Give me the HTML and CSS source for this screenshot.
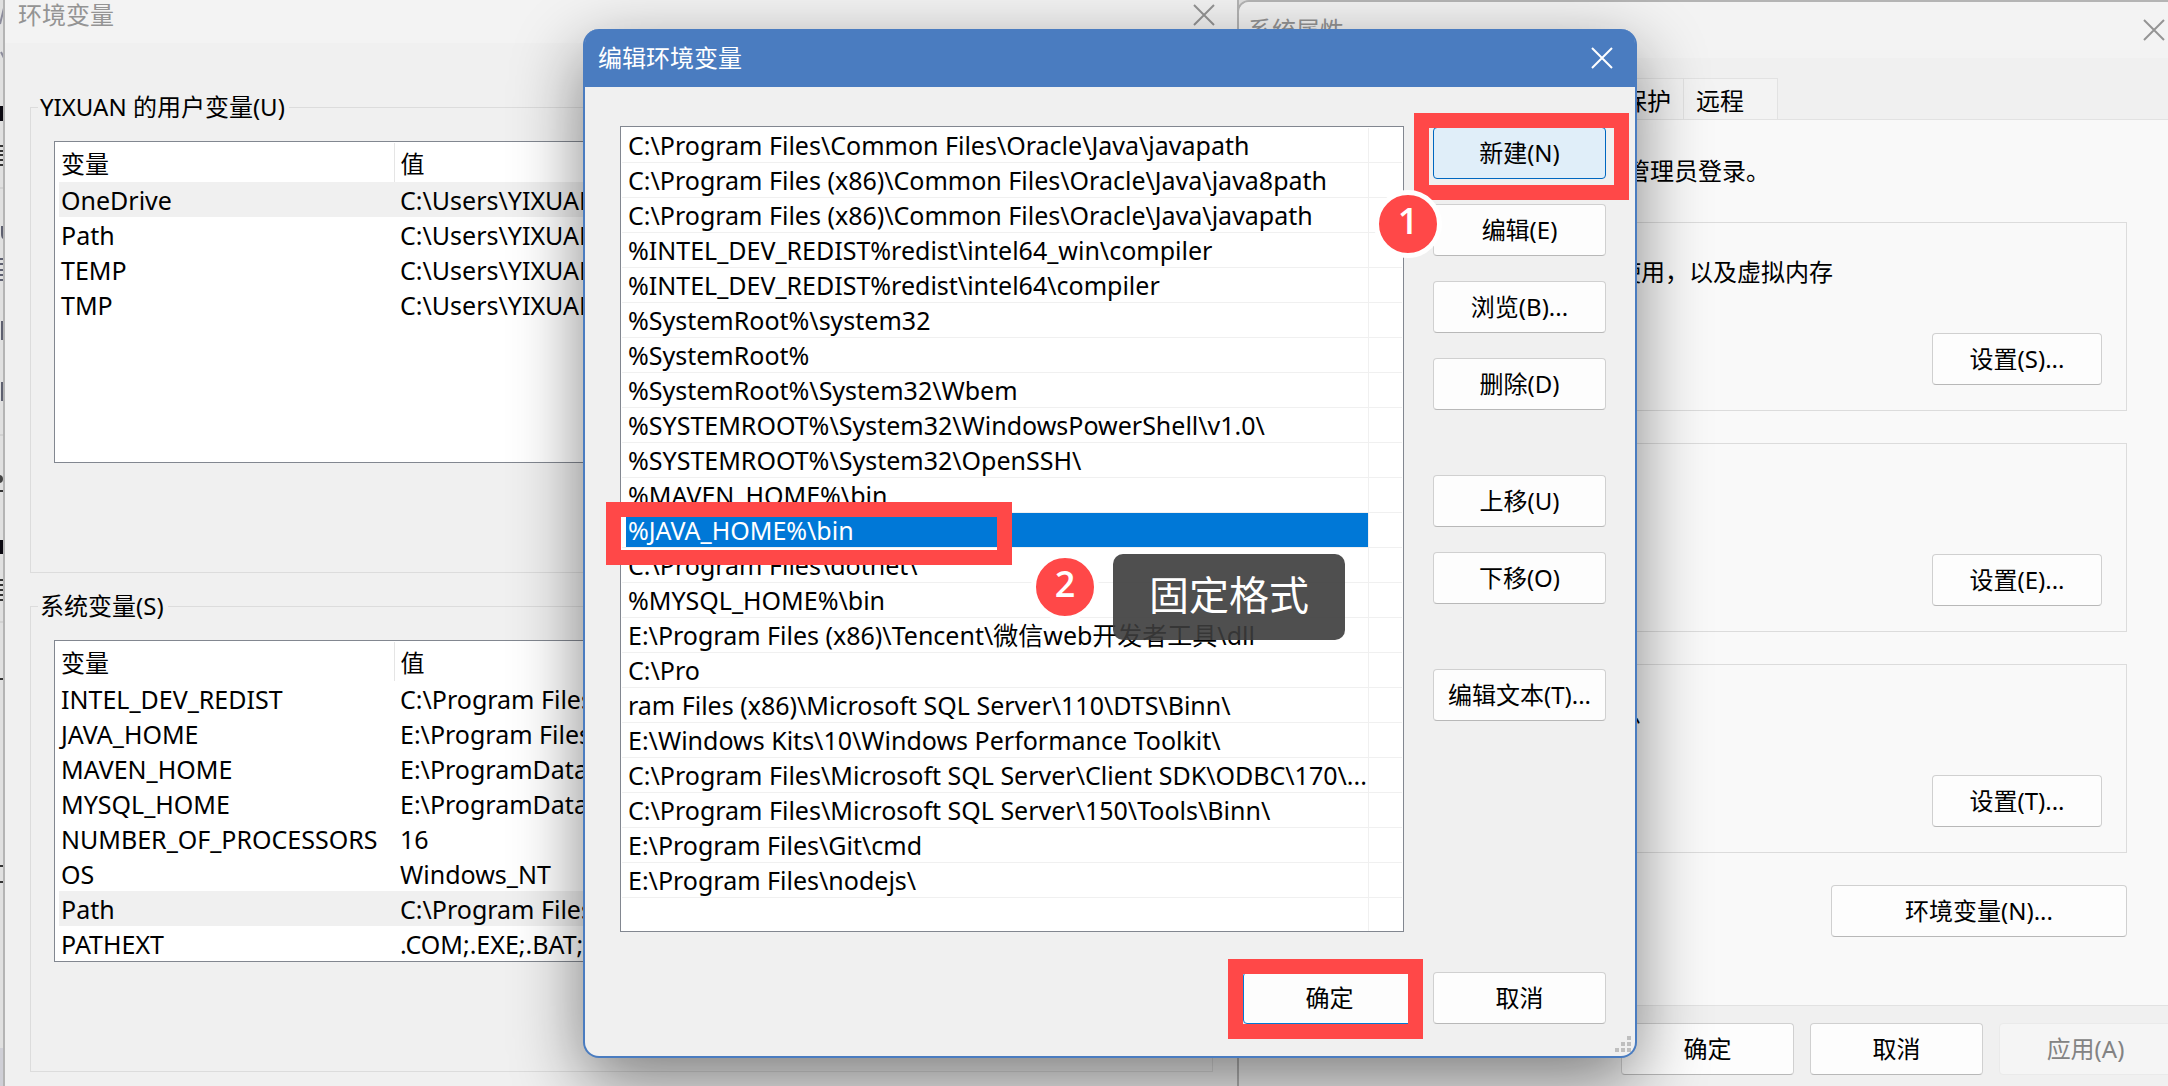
FILE: index.html
```
<!DOCTYPE html>
<html lang="zh-CN">
<head>
    <meta charset="UTF-8">
    <meta name="viewport" content="width=device-width, initial-scale=1.0">
    <title>编辑环境变量</title>
    <link rel="stylesheet" href="styles.css">
</head>
<body>
    <main class="desktop">
        <!-- edge of the app behind the windows -->
        <svg class="backdrop" width="4" height="1086" viewBox="0 0 4 1086" aria-hidden="true">
            <path d="M0 24L4 8M1 52L4 58" stroke="#8c8c9c" stroke-width="2"/>
            <path d="M0 106h4v15h-4z M0 540h4v14h-4z" fill="#0a0810"/>
            <path d="M0 146h4M0 151h4M0 155h4M0 160h4M0 165h4M0 580h4M0 585h4M0 590h4M0 595h4M0 600h4" stroke="#333" stroke-width="2"/>
            <path d="M0 188h4M0 435h4M0 622h4" stroke="#c4c4c4"/>
            <path d="M2 226v8q0 4 2 4M0 259h4M0 264h4M0 270h4M0 275h4M0 280h4M2 321v19M2 382v19" stroke="#5e6070" stroke-width="2" fill="none"/>
            <circle cx="-1" cy="479" r="4" fill="#444"/>
            <path d="M0 491h4M0 679h4M0 866h4M0 882h4" stroke="#333" stroke-width="2"/>
            <path d="M0 1048h4v38h-4z" fill="#cfcfd6"/>
        </svg>

        <section class="window variables">
            <header class="titlebar">
                <h2>环境变量</h2>
                <button class="close" aria-label="关闭"><svg viewBox="0 0 20 20"><path d="M0 0L20 20M20 0L0 20"/></svg></button>
            </header>
            <fieldset class="group">
                <legend>YIXUAN 的用户变量(U)</legend>
                <div class="listview">
                    <table>
                        <thead><tr><th>变量</th><th>值</th></tr></thead>
                        <tbody>
                            <tr class="marked"><td>OneDrive</td><td>C:\Users\YIXUAN\OneDrive</td></tr>
                            <tr><td>Path</td><td>C:\Users\YIXUAN\AppData</td></tr>
                            <tr><td>TEMP</td><td>C:\Users\YIXUAN\AppData</td></tr>
                            <tr><td>TMP</td><td>C:\Users\YIXUAN\AppData</td></tr>
                        </tbody>
                    </table>
                </div>
            </fieldset>
            <fieldset class="group">
                <legend>系统变量(S)</legend>
                <div class="listview">
                    <table>
                        <thead><tr><th>变量</th><th>值</th></tr></thead>
                        <tbody>
                            <tr><td>INTEL_DEV_REDIST</td><td>C:\Program Files</td></tr>
                            <tr><td>JAVA_HOME</td><td>E:\Program Files</td></tr>
                            <tr><td>MAVEN_HOME</td><td>E:\ProgramData\</td></tr>
                            <tr><td>MYSQL_HOME</td><td>E:\ProgramData\</td></tr>
                            <tr><td>NUMBER_OF_PROCESSORS</td><td>16</td></tr>
                            <tr><td>OS</td><td>Windows_NT</td></tr>
                            <tr class="marked"><td>Path</td><td>C:\Program Files</td></tr>
                            <tr><td>PATHEXT</td><td>.COM;.EXE;.BAT;</td></tr>
                        </tbody>
                    </table>
                </div>
            </fieldset>
        </section>

        <section class="window properties">
            <header class="titlebar">
                <h2>系统属性</h2>
                <button class="close" aria-label="关闭"><svg viewBox="0 0 20 20"><path d="M0 0L20 20M20 0L0 20"/></svg></button>
            </header>
            <nav class="tabs">
                <button class="tab">系统保护</button>
                <button class="tab">远程</button>
            </nav>
            <div class="panel">
                <p class="notice">要进行大多数更改，你必须作为管理员登录。</p>
                <div class="option">
                    <p>视觉效果，处理器计划，内存使用，以及虚拟内存</p>
                    <button class="btn">设置(S)...</button>
                </div>
                <div class="option">
                    <p></p>
                    <button class="btn">设置(E)...</button>
                </div>
                <div class="option">
                    <p>系统启动、系统故障和调试信息</p>
                    <button class="btn">设置(T)...</button>
                </div>
                <button class="btn wide">环境变量(N)...</button>
            </div>
            <footer class="actions">
                <button class="btn">确定</button>
                <button class="btn">取消</button>
                <button class="btn" disabled>应用(A)</button>
            </footer>
        </section>

        <section class="dialog" role="dialog" aria-labelledby="dialog-title">
            <header class="dialog-title">
                <h1 id="dialog-title">编辑环境变量</h1>
                <button class="close" aria-label="关闭"><svg viewBox="0 0 20 20"><path d="M0 0L20 20M20 0L0 20"/></svg></button>
            </header>
            <div class="dialog-body">
                <ul class="paths">
                    <li><span>C:\Program Files\Common Files\Oracle\Java\javapath</span></li>
                    <li><span>C:\Program Files (x86)\Common Files\Oracle\Java\java8path</span></li>
                    <li><span>C:\Program Files (x86)\Common Files\Oracle\Java\javapath</span></li>
                    <li><span>%INTEL_DEV_REDIST%redist\intel64_win\compiler</span></li>
                    <li><span>%INTEL_DEV_REDIST%redist\intel64\compiler</span></li>
                    <li><span>%SystemRoot%\system32</span></li>
                    <li><span>%SystemRoot%</span></li>
                    <li><span>%SystemRoot%\System32\Wbem</span></li>
                    <li><span>%SYSTEMROOT%\System32\WindowsPowerShell\v1.0\</span></li>
                    <li><span>%SYSTEMROOT%\System32\OpenSSH\</span></li>
                    <li><span>%MAVEN_HOME%\bin</span></li>
                    <li class="selected"><span>%JAVA_HOME%\bin</span></li>
                    <li><span>C:\Program Files\dotnet\</span></li>
                    <li><span>%MYSQL_HOME%\bin</span></li>
                    <li><span>E:\Program Files (x86)\Tencent\微信web开发者工具\dll</span></li>
                    <li><span>C:\Pro</span></li>
                    <li><span>ram Files (x86)\Microsoft SQL Server\110\DTS\Binn\</span></li>
                    <li><span>E:\Windows Kits\10\Windows Performance Toolkit\</span></li>
                    <li><span>C:\Program Files\Microsoft SQL Server\Client SDK\ODBC\170\...</span></li>
                    <li><span>C:\Program Files\Microsoft SQL Server\150\Tools\Binn\</span></li>
                    <li><span>E:\Program Files\Git\cmd</span></li>
                    <li><span>E:\Program Files\nodejs\</span></li>
                    <li><span></span></li>
                </ul>
                <div class="commands">
                    <div class="command-set">
                        <button class="btn hot">新建(N)</button>
                        <button class="btn">编辑(E)</button>
                        <button class="btn">浏览(B)...</button>
                        <button class="btn">删除(D)</button>
                    </div>
                    <div class="command-set">
                        <button class="btn">上移(U)</button>
                        <button class="btn">下移(O)</button>
                    </div>
                    <button class="btn">编辑文本(T)...</button>
                </div>
            </div>
            <footer class="dialog-actions">
                <button class="btn default">确定</button>
                <button class="btn">取消</button>
            </footer>
            <svg class="grip" width="16" height="16" viewBox="0 0 16 16" aria-hidden="true">
                <path d="M12 0h4v4h-4zM6 6h4v4H6zM12 6h4v4h-4zM0 12h4v4H0zM6 12h4v4H6zM12 12h4v4h-4z" fill="#bfbfbf"/>
            </svg>
        </section>

        <!-- tutorial marks -->
        <div class="mark mark-new"></div>
        <div class="mark mark-java"></div>
        <div class="mark mark-ok"></div>
        <span class="step step-1">1</span>
        <span class="step step-2">2</span>
        <div class="tip">固定格式</div>
    </main>
</body>
</html>
```
FILE: styles.css
```
* {
    box-sizing: border-box;
}
body {
    margin: 0;
    font-family: "Noto Sans", "Noto Sans CJK SC", sans-serif;
    font-size: 24px;
    line-height: 34px;
    color: #000;
    background: #e0e0e0;
}
h1, h2, p, ul {
    margin: 0;
    padding: 0;
    font-size: 24px;
    font-weight: 400;
}
button {
    font: inherit;
    color: inherit;
    padding: 0;
}
.desktop {
    position: relative;
    height: 100vh;
    min-height: 1086px;
    overflow: hidden;
}
.backdrop {
    position: absolute;
    left: 0;
    top: 0;
}

/* windows */
.window {
    position: absolute;
    background: #f0f0f0;
}
.variables {
    left: 3px;
    top: -15px;
    width: 1236px;
    height: 1200px;
    border: 2px solid #b4b4b4;
}
.properties {
    left: 1237px;
    top: 0;
    width: 1000px;
    height: 1120px;
    border: 2px solid #b4b4b4;
    border-radius: 12px 0 0 0;
}
.titlebar {
    display: flex;
    align-items: center;
    justify-content: space-between;
    height: 56px;
    padding: 0 23px 0 13px;
    background: #f3f3f3;
    color: #949494;
}
.properties .titlebar {
    padding: 0 71px 0 9px;
    border-radius: 10px 0 0 0;
}
.close {
    width: 20px;
    height: 20px;
    border: none;
    background: none;
}
.close svg {
    display: block;
    width: 20px;
    height: 20px;
    overflow: visible;
    fill: none;
    stroke: currentColor;
    stroke-width: 2;
}

/* group boxes and lists */
.group {
    height: 483px;
    margin: 47px 24px 0 25px;
    padding: 17px 24px 0;
    border: 1px solid #dcdcdc;
}
.group + .group {
    margin-top: 16px;
}
.group legend {
    margin-left: -17px;
    padding: 0 4px 0 2px;
}
.listview {
    height: 322px;
    margin-left: -1px;
    padding: 1px 0 0 4px;
    background: #fff;
    border: 1px solid #828790;
    overflow: hidden;
}
.listview table {
    width: 100%;
    border-collapse: collapse;
    table-layout: fixed;
}
.listview th {
    height: 39px;
    padding: 3px 0 0 2px;
    font-weight: 400;
    text-align: left;
}
.listview th:first-child {
    width: 335px;
    border-right: 1px solid #e5e5e5;
}
.listview td {
    height: 35px;
    padding: 0 0 0 2px;
    font-size: 25px;
    white-space: nowrap;
}
.listview th + th, .listview td + td {
    padding-left: 6px;
}
.marked {
    background: #f0f0f0;
}

/* buttons */
.btn {
    width: 173px;
    height: 52px;
    background: #fdfdfd;
    border: 1px solid #d0d0d0;
    border-bottom-color: #b8b8b8;
    border-radius: 4px;
}
.btn:disabled {
    background: #f5f5f5;
    border-color: #eaeaea;
    color: #838383;
}
.btn.hot {
    background: #e0eef9;
    border-color: #0067c0;
}
.btn.default {
    border-color: #0078d4;
}

/* system properties */
.tabs {
    display: flex;
    margin-top: 20px;
    padding-left: 323px;
}
.tab {
    height: 41px;
    padding: 3px 12px 0;
    background: #f3f3f3;
    border: 1px solid #e2e2e2;
    border-bottom: none;
    text-align: left;
}
.tab + .tab {
    width: 94px;
    border-left: none;
}
.panel {
    height: 887px;
    padding: 34px 107px 0 30px;
    background: #f9f9f9;
    border: 1px solid #e2e2e2;
}
.notice {
    margin: 0 0 34px 20px;
}
.option {
    display: flex;
    flex-direction: column;
    justify-content: space-between;
    align-items: flex-end;
    height: 189px;
    margin-bottom: 32px;
    padding: 32px 24px 25px 34px;
    border: 1px solid #dcdcdc;
}
.option p {
    align-self: flex-start;
}
.option .btn {
    width: 170px;
}
.btn.wide {
    display: block;
    width: 296px;
    margin-left: auto;
}
.actions {
    display: flex;
    gap: 16px;
    padding: 17px 0 0 382px;
}

/* edit dialog */
.dialog {
    position: absolute;
    left: 583px;
    top: 29px;
    width: 1054px;
    border: 2px solid #4a7cc0;
    border-top: none;
    border-radius: 16px;
    background: #f0f0f0;
    box-shadow: 0 24px 70px rgba(0, 0, 0, 0.48);
}
.dialog-title {
    display: flex;
    align-items: center;
    justify-content: space-between;
    height: 58px;
    padding: 0 23px 0 13px;
    border-radius: 14px 14px 0 0;
    background: #4a7cc0;
    color: #fff;
}
.dialog-body {
    display: flex;
    gap: 29px;
    padding: 39px 29px 0 35px;
}
.paths {
    flex: 1;
    height: 806px;
    padding: 1px;
    list-style: none;
    font-size: 25px;
    line-height: 35px;
    background: #fff;
    border: 1px solid #828790;
    overflow: hidden;
}
.paths li {
    display: flex;
    height: 35px;
    padding: 0 33px 0 4px;
    border-bottom: 1px solid #f0f0f0;
}
.paths span {
    flex: 1;
    padding-left: 2px;
    border-right: 1px solid #f0f0f0;
    white-space: nowrap;
}
.paths .selected span {
    background: #0078d7;
    color: #fff;
}
.commands, .command-set {
    display: flex;
    flex-direction: column;
}
.commands {
    gap: 65px;
    padding-top: 1px;
}
.command-set {
    gap: 25px;
}
.dialog-actions {
    display: flex;
    justify-content: flex-end;
    gap: 17px;
    padding: 40px 29px 32px;
}
.grip {
    position: absolute;
    right: 4px;
    bottom: 4px;
}

/* annotations */
.mark {
    position: absolute;
    border: 15px solid #ff4848;
}
.mark-new {
    left: 1414px;
    top: 113px;
    width: 215px;
    height: 87px;
}
.mark-java {
    left: 606px;
    top: 502px;
    width: 406px;
    height: 63px;
}
.mark-ok {
    left: 1228px;
    top: 959px;
    width: 195px;
    height: 80px;
}
.step {
    position: absolute;
    width: 68px;
    height: 68px;
    border: 5px solid #fff;
    border-radius: 50%;
    background: #ff4848;
    color: #fff;
    font-family: "Open Sans", sans-serif;
    font-size: 36px;
    font-weight: 600;
    line-height: 52px;
    text-align: center;
}
.step-1 {
    left: 1374px;
    top: 190px;
}
.step-2 {
    left: 1031px;
    top: 553px;
}
.tip {
    position: absolute;
    left: 1113px;
    top: 554px;
    padding: 12px 36px 16px;
    border-radius: 10px;
    background: rgba(60, 60, 60, 0.9);
    color: #fff;
    font-size: 40px;
    line-height: 58px;
}
```
